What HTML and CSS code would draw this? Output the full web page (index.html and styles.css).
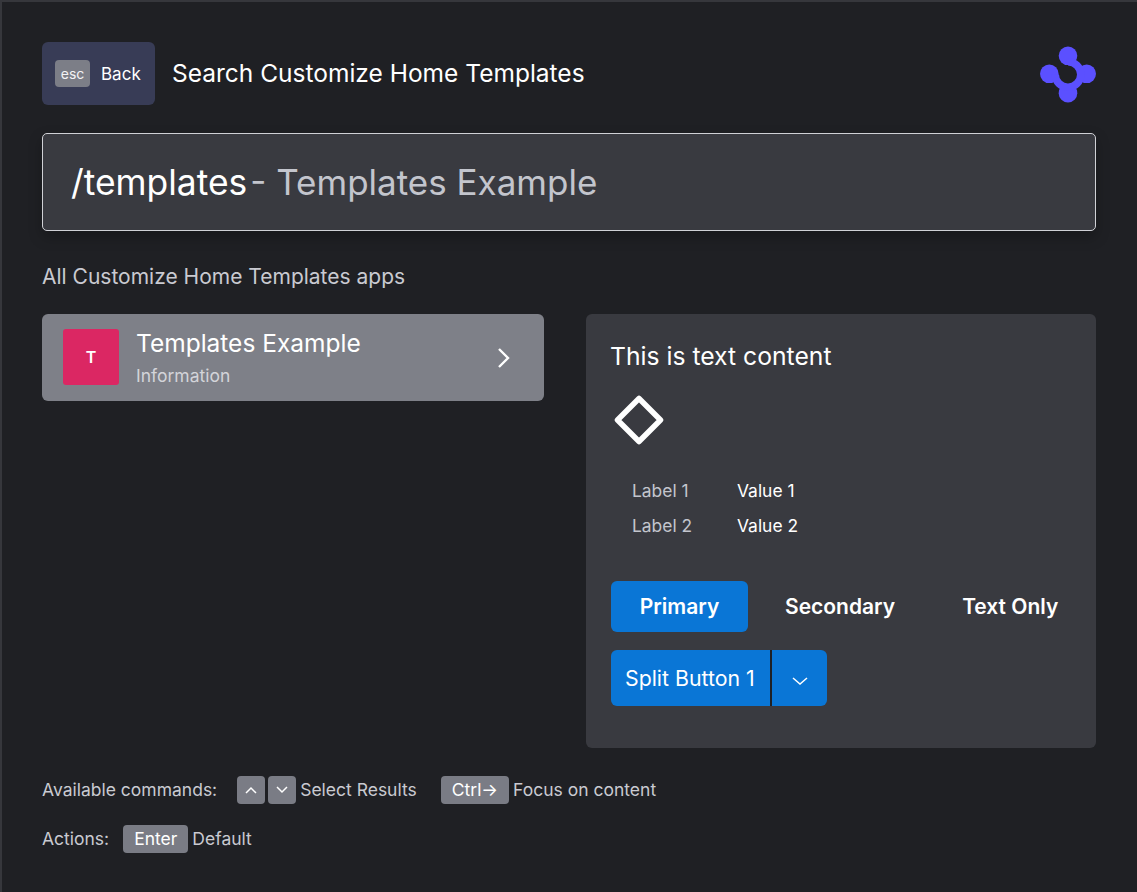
FILE: index.html
```html
<!DOCTYPE html>
<html lang="en">
<head>
  <meta charset="UTF-8" />
  <title>Search Customize Home Templates</title>
  <link rel="stylesheet" href="styles.css">
</head>
<body>
  <div class="page">
    <header class="top">
      <div class="back"><kbd class="esc">esc</kbd><span>Back</span></div>
      <h1 class="title">Search Customize Home Templates</h1>
      <svg class="logo" width="58" height="58" viewBox="0 0 58 58" fill="#5b50ff">
        <circle cx="29" cy="10.800" r="9.300"/>
        <circle cx="10.300" cy="28.800" r="9.300"/>
        <circle cx="47.700" cy="28.800" r="9.300"/>
        <circle cx="29" cy="48.200" r="9.300"/>
        <path d="M29 16.700 A12.800 12.800 0 1 1 16.200 29.500" fill="none" stroke="#5b50ff" stroke-width="7.600"/>
      </svg>
    </header>

    <div class="search"><span class="query">/templates</span><span class="hint">- Templates Example</span></div>

    <p class="section">All Customize Home Templates apps</p>

    <div class="columns">
      <div class="results">
        <div class="item">
          <div class="avatar">T</div>
          <div class="item-text">
            <div class="item-title">Templates Example</div>
            <div class="item-sub">Information</div>
          </div>
          <svg class="item-arrow" width="16" height="22" viewBox="0 0 16 22"><path d="M3 2 L12 11 L3 20" fill="none" stroke="#fff" stroke-width="2.400"/></svg>
        </div>
      </div>

      <div class="panel">
        <p class="panel-text">This is text content</p>
        <svg class="diamond" width="50" height="50" viewBox="0 0 50 50"><path d="M25 3.500 L46.500 25 L25 46.500 L3.500 25 Z" fill="none" stroke="#fff" stroke-width="5.500" stroke-linejoin="round"/></svg>
        <dl class="facts">
          <dt>Label 1</dt><dd>Value 1</dd>
          <dt>Label 2</dt><dd>Value 2</dd>
        </dl>
        <div class="buttons">
          <button class="btn primary">Primary</button>
          <button class="btn">Secondary</button>
          <button class="btn last">Text Only</button>
        </div>
        <div class="split">
          <button class="split-main">Split Button 1</button>
          <button class="split-more"><svg width="18" height="10" viewBox="0 0 18 10"><path d="M2 2 L9 8 L16 2" fill="none" stroke="#fff" stroke-width="1.500"/></svg></button>
        </div>
      </div>
    </div>

    <footer class="commands">
      <div class="cmd-row">
        <span class="cmd-label">Available commands:</span>
        <span class="cmd-group">
          <kbd class="key small"><svg width="12" height="8" viewBox="0 0 12 8"><path d="M1 7 L6 2 L11 7" fill="none" stroke="#fff" stroke-width="1.500"/></svg></kbd>
          <kbd class="key small"><svg width="12" height="8" viewBox="0 0 12 8"><path d="M1 1 L6 6 L11 1" fill="none" stroke="#fff" stroke-width="1.500"/></svg></kbd>
          <span class="cmd-text">Select Results</span>
        </span>
        <span class="cmd-group">
          <kbd class="key">Ctrl→</kbd>
          <span class="cmd-text">Focus on content</span>
        </span>
      </div>
      <div class="cmd-row">
        <span class="cmd-label">Actions:</span>
        <span class="cmd-group">
          <kbd class="key">Enter</kbd>
          <span class="cmd-text">Default</span>
        </span>
      </div>
    </footer>
  </div>
</body>
</html>
```

FILE: styles.css
```css
* {
  box-sizing: border-box;
}
html, body {
  margin: 0;
  height: 100%;
}
body {
  font-family: Inter, "Liberation Sans", sans-serif;
  background: #1f2024;
  color: #fff;
}
.page {
  height: 892px;
  border-top: 2px solid #36373c;
  border-left: 2px solid #36373c;
  padding: 40px 41px 0 40px;
  overflow: hidden;
}
.top {
  display: flex;
  align-items: center;
  height: 63px;
}
.back {
  display: flex;
  align-items: center;
  width: 113px;
  height: 63px;
  padding-left: 13px;
  gap: 11px;
  background: #383c56;
  border-radius: 6px;
  font-size: 17px;
}
.esc {
  width: 35px;
  height: 27px;
  display: flex;
  align-items: center;
  justify-content: center;
  background: #7c7e87;
  border-radius: 4px;
  font-family: inherit;
  font-size: 14px;
  color: #f3f3f5;
}
.title {
  margin: 0 0 2px 17px;
  font-size: 24.500px;
  font-weight: 400;
  flex: 1;
}
.logo {
  margin-right: -1px;
}
.search {
  margin-top: 28px;
  height: 98px;
  display: flex;
  align-items: center;
  padding-left: 28px;
  background: #393a40;
  border: 1px solid #d0d1d6;
  border-radius: 5px;
  box-shadow: 0 6px 14px rgba(0, 0, 0, 0.25);
  font-size: 35px;
}
.query {
  font-size: 35.400px;
}
.hint {
  margin-left: 3px;
  color: #c3c5cd;
}
.section {
  margin: 34px 0 0;
  height: 24px;
  line-height: 24px;
  font-size: 21px;
  color: #c9cad1;
}
.columns {
  display: grid;
  grid-template-columns: 502px 510px;
  column-gap: 42px;
  margin-top: 25px;
}
.item {
  height: 87px;
  display: flex;
  align-items: center;
  padding: 0 32px 0 21px;
  background: #7e8088;
  border-radius: 6px;
}
.avatar {
  width: 56px;
  height: 56px;
  margin-bottom: 1px;
  display: flex;
  align-items: center;
  justify-content: center;
  background: #db2763;
  border-radius: 3px;
  font-size: 16px;
  font-weight: 600;
}
.item-text {
  flex: 1;
  margin-left: 17px;
}
.item-title {
  font-size: 24.500px;
  line-height: 30px;
}
.item-sub {
  margin-top: 6px;
  font-size: 17.500px;
  line-height: 24px;
  color: #d3d4d9;
}
.panel {
  height: 434px;
  padding: 25px;
  background: #393a40;
  border-radius: 6px;
}
.panel-text {
  margin: 0 0 0 -1px;
  font-size: 24.700px;
  line-height: 34px;
}
.diamond {
  display: block;
  margin: 22px 0 0 3px;
}
.facts {
  display: grid;
  grid-template-columns: 105px 1fr;
  row-gap: 13px;
  margin: 35px 0 0 21px;
  font-size: 17.400px;
  line-height: 22px;
}
.facts dt {
  color: #c3c5cd;
}
.facts dd {
  margin: 0;
}
.buttons {
  display: flex;
  gap: 8px;
  margin-top: 44px;
}
.btn {
  height: 51px;
  padding: 0 29px;
  border: none;
  border-radius: 6px;
  background: none;
  color: #fff;
  font-family: inherit;
  font-size: 21px;
  font-weight: 600;
  white-space: nowrap;
  flex: none;
}
.btn.primary {
  width: 137px;
  padding: 0;
  background: #0a76d6;
}
.btn.last {
  margin-left: 1px;
}
.split {
  display: flex;
  margin-top: 18px;
}
.split button {
  height: 56px;
  border: none;
  background: #0a76d6;
  color: #fff;
  font-family: inherit;
  font-size: 21.300px;
}
.split-main {
  width: 159px;
  padding: 0 0 0 14px;
  text-align: left;
  border-radius: 6px 0 0 6px;
}
.split .split-more {
  width: 57px;
  border-left: 2px solid #1f2024;
  border-radius: 0 6px 6px 0;
}
.commands {
  margin-top: 28px;
  font-size: 17.500px;
  color: #c9cad1;
}
.cmd-row {
  display: flex;
  align-items: center;
  height: 28px;
  margin-bottom: 21px;
}
.cmd-label {
  margin-right: 20px;
  padding-bottom: 2px;
}
.cmd-row:last-child .cmd-label {
  margin-right: 14px;
}
.cmd-group {
  display: flex;
  align-items: center;
  gap: 3px;
  margin-right: 24px;
}
.cmd-text {
  margin-left: 1px;
  padding-bottom: 2px;
}
.key {
  height: 28px;
  padding: 0 11px 2px;
  display: flex;
  align-items: center;
  background: #7a7c85;
  border-radius: 4px;
  font-family: inherit;
  font-size: 17.500px;
  color: #fff;
}
.key.small {
  width: 28px;
  padding: 0;
  justify-content: center;
}
```
